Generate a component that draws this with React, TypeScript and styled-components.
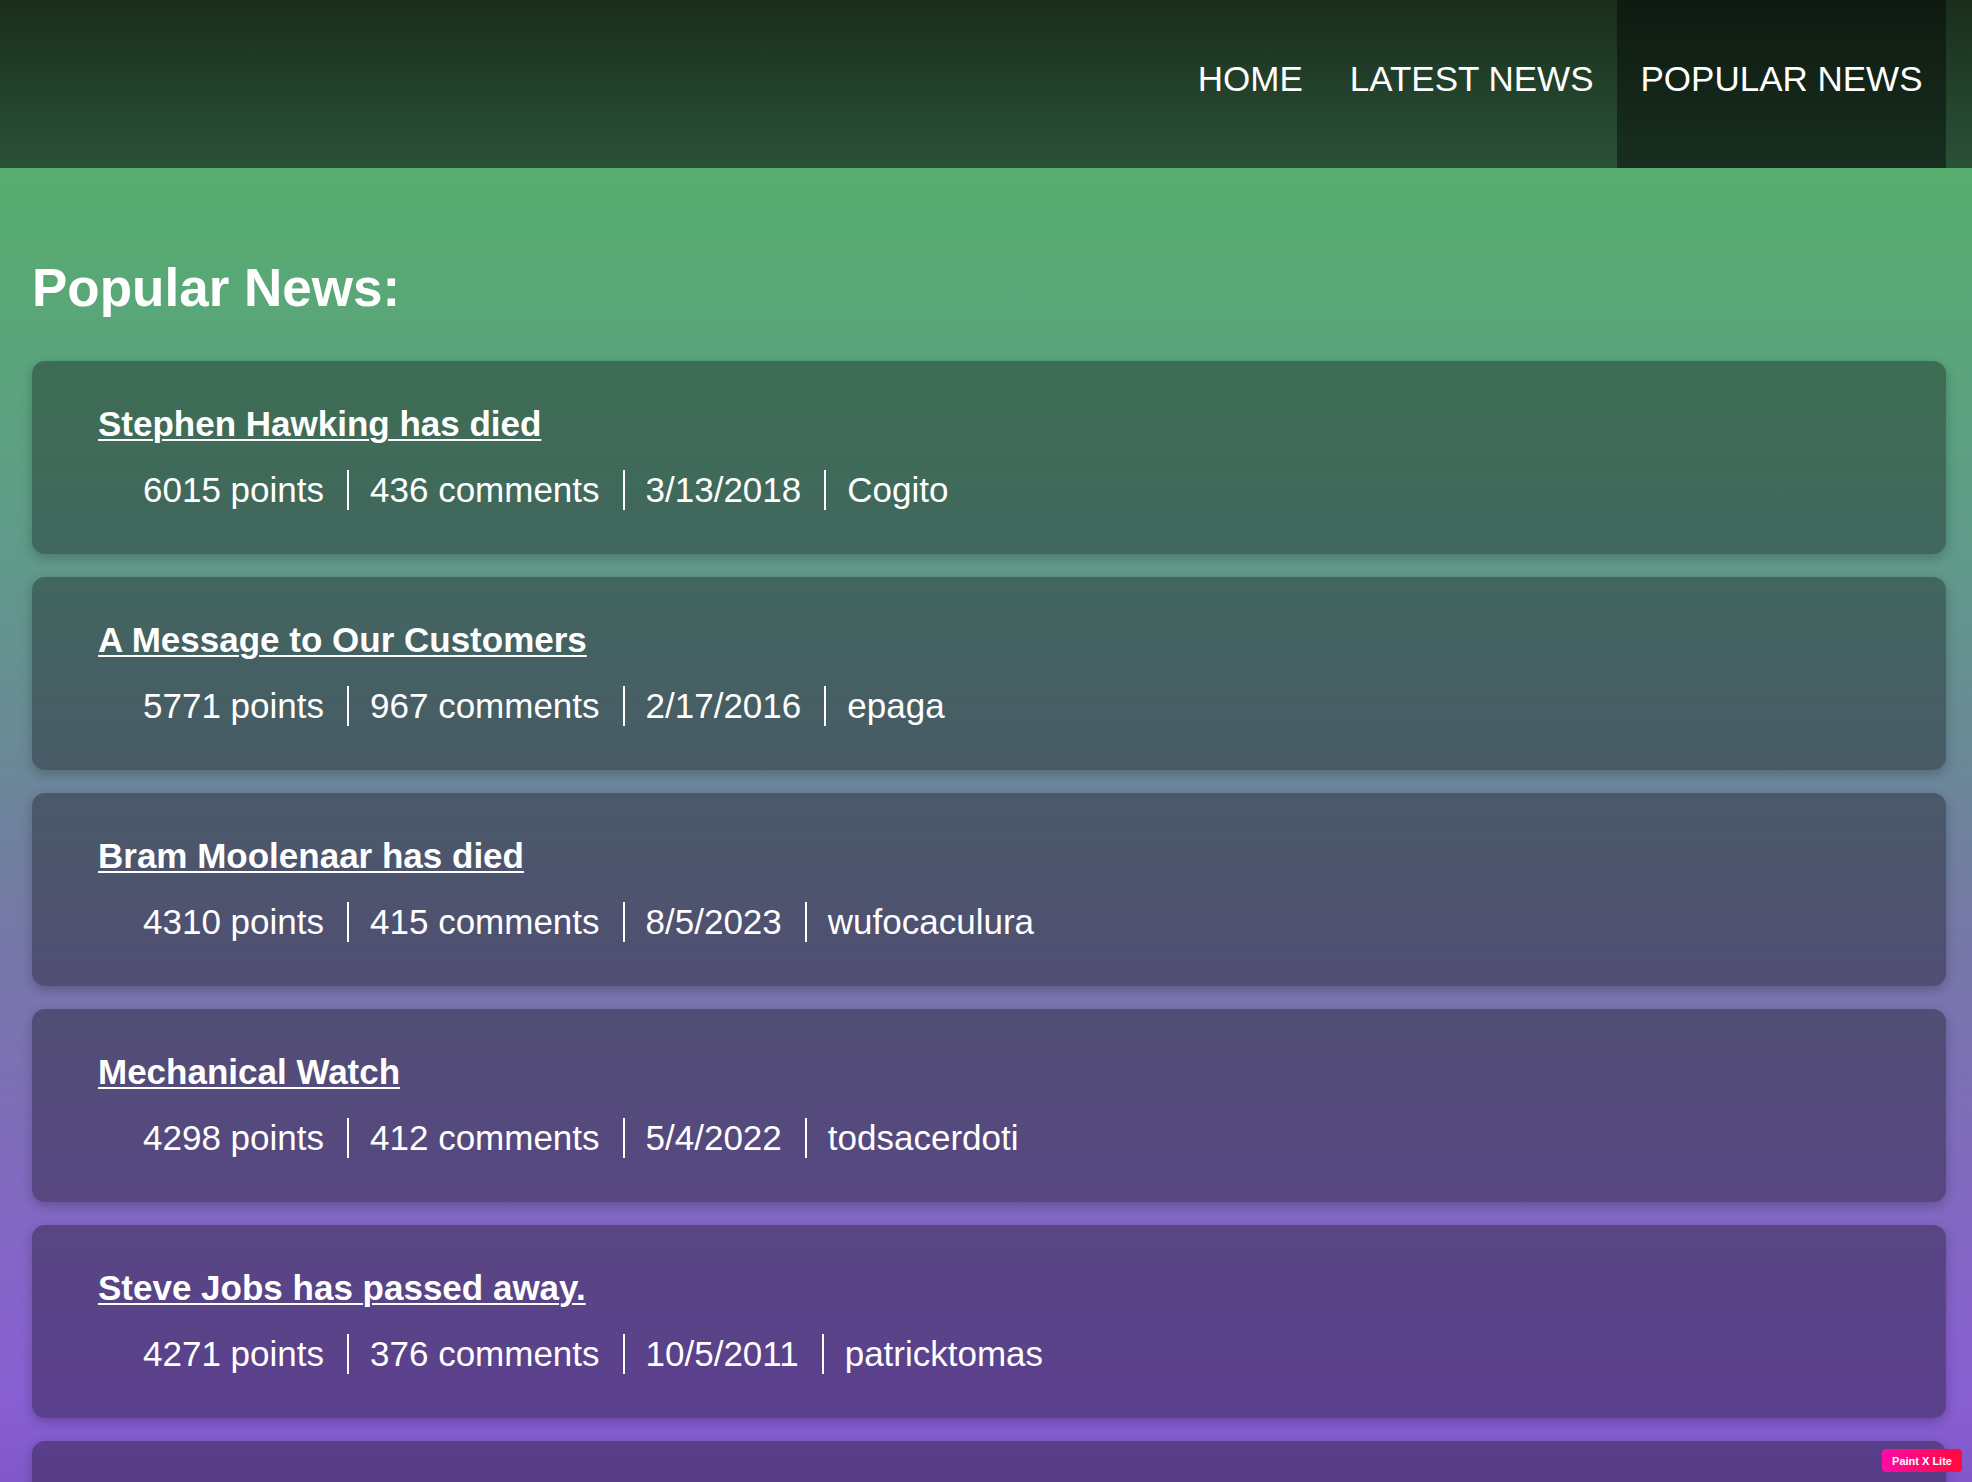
import styled, { createGlobalStyle } from 'styled-components';

const GlobalStyle = createGlobalStyle`
  html {
    background: linear-gradient(
      to bottom,
      #56ae6e 0px,
      #56ae6e 168px,
      #5f9b89 540px,
      #698a96 740px,
      #7678a8 940px,
      #8466c6 1250px,
      #885fd2 1400px,
      #8158c8 1482px
    ) fixed;
  }
  body {
    margin: 0;
    min-height: 100vh;
    font-family: 'Liberation Sans', Arial, Helvetica, sans-serif;
    color: #fff;
  }
`;

const Header = styled.header`
  height: 168px;
  display: flex;
  justify-content: flex-end;
  padding-right: 26px;
  background: linear-gradient(to bottom, #1a2d1d, #2a5237);
`;

const NavLink = styled.a<{ $active?: boolean }>`
  display: block;
  height: 168px;
  box-sizing: border-box;
  padding: 59px 23.5px 0;
  font-size: 35px;
  line-height: 40px;
  text-transform: uppercase;
  color: #fff;
  text-decoration: none;
  background: ${(p) => (p.$active ? 'rgba(0, 0, 0, 0.42)' : 'transparent')};
`;

const Main = styled.main`
  padding: 90px 26px 0 32px;
`;

const Heading = styled.h2`
  margin: 0 0 43px;
  font-size: 53px;
  line-height: 60px;
  font-weight: 700;
`;

const List = styled.div`
  display: flex;
  flex-direction: column;
  gap: 23px;
`;

const Card = styled.article`
  height: 193px;
  box-sizing: border-box;
  padding: 43px 66px 0;
  border-radius: 13px;
  background: rgba(8, 8, 12, 0.35);
  box-shadow: 0 4px 12px rgba(0, 0, 0, 0.22);
`;

const Title = styled.a`
  display: inline-block;
  font-size: 35px;
  line-height: 40px;
  font-weight: 700;
  color: #fff;
  text-decoration: underline;
  text-decoration-thickness: 2px;
  text-underline-offset: 3px;
`;

const Meta = styled.ul`
  display: flex;
  margin: 26px 0 0;
  padding: 0 0 0 22px;
  list-style: none;
`;

const MetaItem = styled.li`
  font-size: 35px;
  line-height: 40px;
  padding: 0 23px;
  & + & {
    border-left: 2px solid #fff;
    padding-left: 21px;
  }
`;

const Badge = styled.div`
  position: fixed;
  right: 10px;
  bottom: 10px;
  width: 80px;
  height: 23px;
  border-radius: 4px;
  display: flex;
  align-items: center;
  justify-content: center;
  font-size: 11px;
  font-weight: 700;
  color: #fff;
  background: linear-gradient(to right, #ff0aa4, #ff0a3c);
`;

type Story = {
  title: string;
  points: number;
  comments: number;
  date: string;
  by: string;
};

const stories: Story[] = [
  { title: 'Stephen Hawking has died', points: 6015, comments: 436, date: '3/13/2018', by: 'Cogito' },
  { title: 'A Message to Our Customers', points: 5771, comments: 967, date: '2/17/2016', by: 'epaga' },
  { title: 'Bram Moolenaar has died', points: 4310, comments: 415, date: '8/5/2023', by: 'wufocaculura' },
  { title: 'Mechanical Watch', points: 4298, comments: 412, date: '5/4/2022', by: 'todsacerdoti' },
  { title: 'Steve Jobs has passed away.', points: 4271, comments: 376, date: '10/5/2011', by: 'patricktomas' },
];

export default function App() {
  return (
    <>
      <GlobalStyle />
      <Header>
        <NavLink href="#">Home</NavLink>
        <NavLink href="#">Latest News</NavLink>
        <NavLink href="#" $active>
          Popular News
        </NavLink>
      </Header>
      <Main>
        <Heading>Popular News:</Heading>
        <List>
          {stories.map((s) => (
            <Card key={s.title}>
              <Title href="#">{s.title}</Title>
              <Meta>
                <MetaItem>{s.points} points</MetaItem>
                <MetaItem>{s.comments} comments</MetaItem>
                <MetaItem>{s.date}</MetaItem>
                <MetaItem>{s.by}</MetaItem>
              </Meta>
            </Card>
          ))}
          {/* next story starts below the fold */}
          <Card />
        </List>
      </Main>
      <Badge>Paint X Lite</Badge>
    </>
  );
}
